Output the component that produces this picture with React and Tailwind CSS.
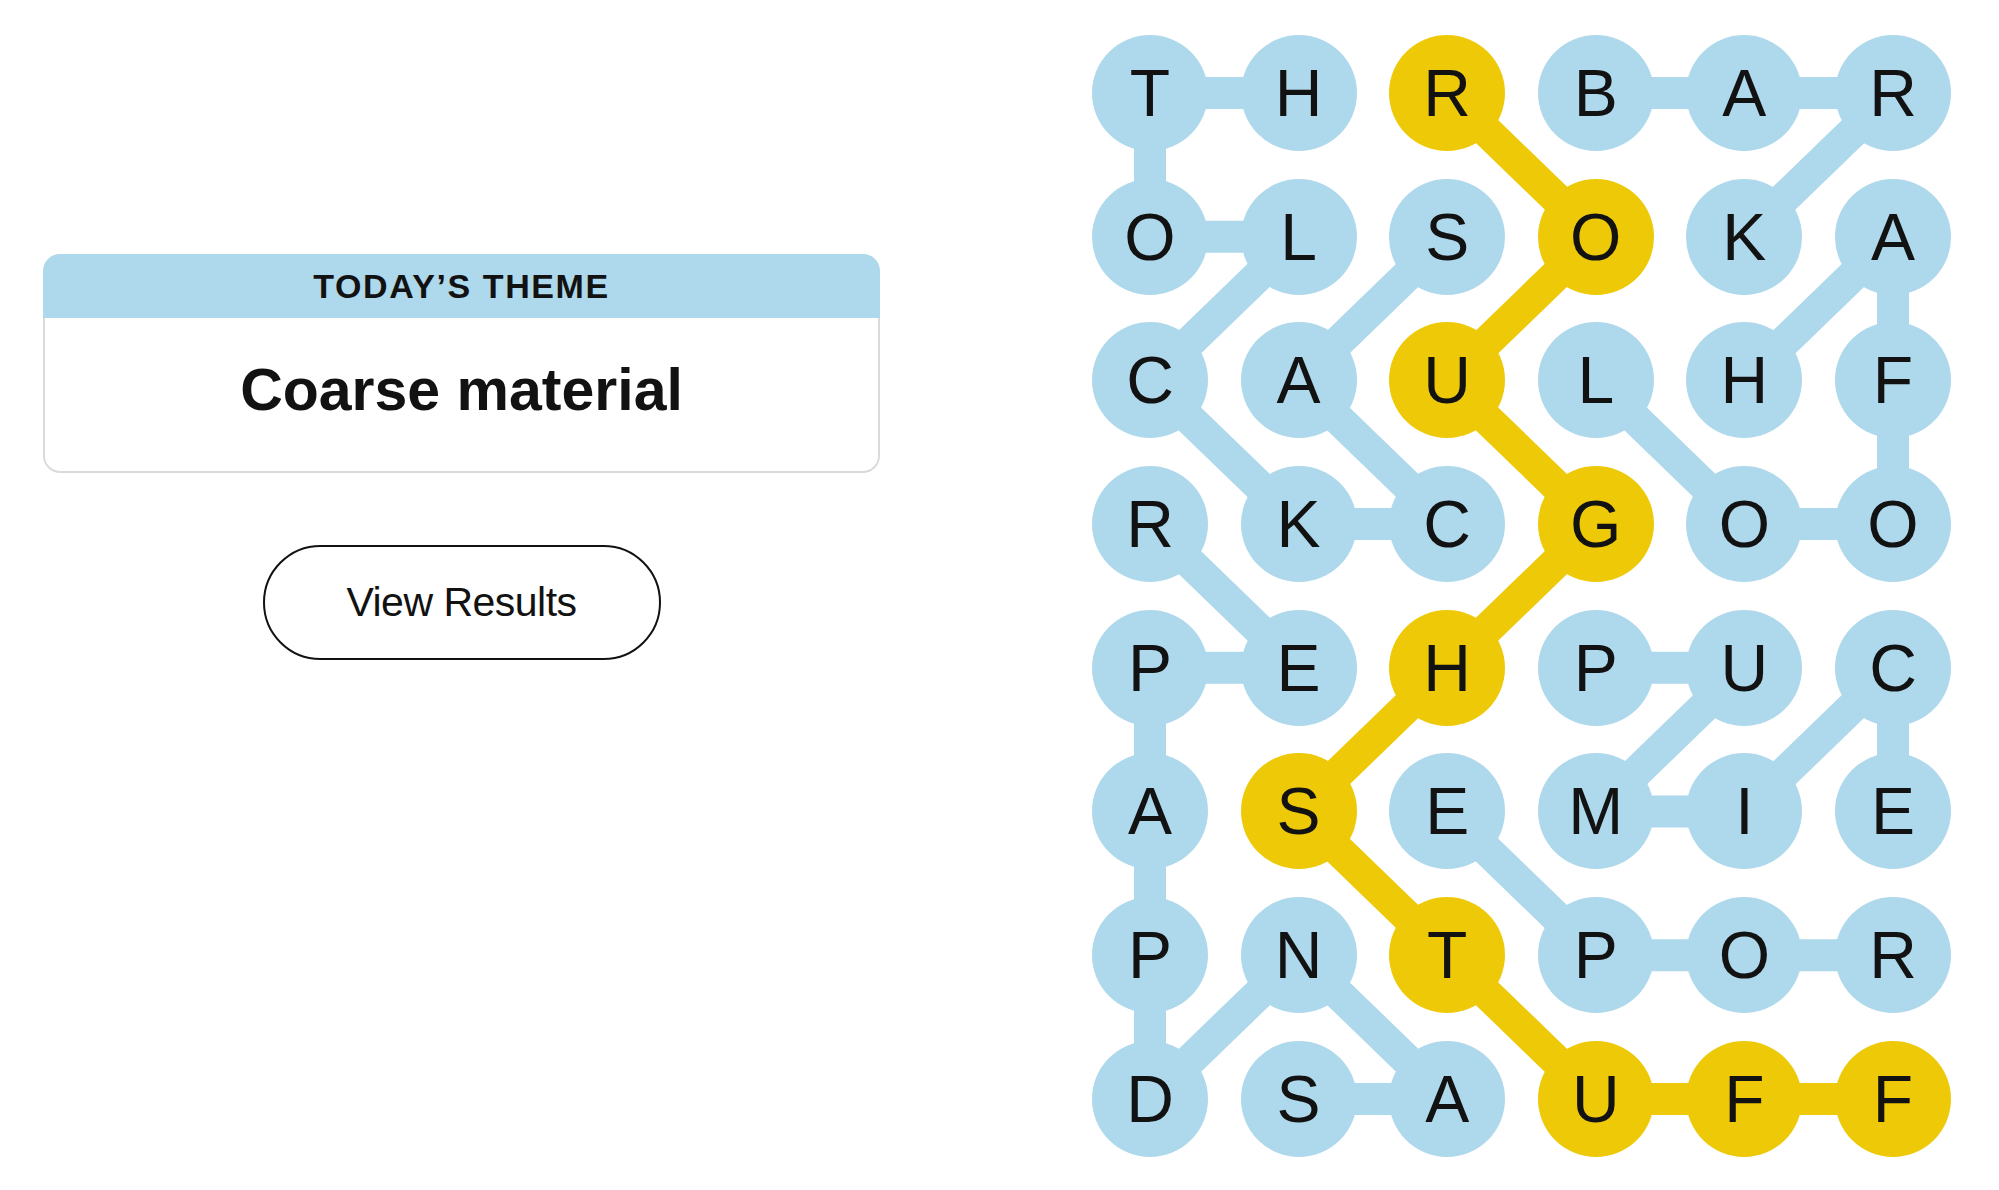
import React from "react";

const ROWS = ["THRBAR", "OLSOKA", "CAULHF", "RKCGOO", "PEHPUC", "ASEMIE", "PNTPOR", "DSAUFF"];

const CELL = 116;
const STEP_X = 148.6;
const STEP_Y = 143.7;

const BLUE = "#aed8eb";
const YELLOW = "#eec908";

// Found words, each as the ordered path of [row, col] cells.
const WORDS = [
  { color: BLUE, path: [[1, 2], [2, 1], [3, 2], [3, 1], [2, 0], [1, 1], [1, 0], [0, 0], [0, 1]] }, // SACKCLOTH
  { color: BLUE, path: [[2, 3], [3, 4], [3, 5], [2, 5], [1, 5], [2, 4]] }, // LOOFAH
  { color: BLUE, path: [[7, 1], [7, 2], [6, 1], [7, 0], [6, 0], [5, 0], [4, 0], [4, 1], [3, 0]] }, // SANDPAPER
  { color: BLUE, path: [[4, 3], [4, 4], [5, 3], [5, 4], [4, 5], [5, 5]] }, // PUMICE
  { color: BLUE, path: [[6, 5], [6, 4], [6, 3], [5, 2]] }, // ROPE
  { color: BLUE, path: [[0, 3], [0, 4], [0, 5], [1, 4]] }, // BARK
  { color: YELLOW, path: [[0, 2], [1, 3], [2, 2], [3, 3], [4, 2], [5, 1], [6, 2], [7, 3], [7, 4], [7, 5]] }, // ROUGHSTUFF
];

const cellColor = {};
WORDS.forEach((w) => w.path.forEach(([r, c]) => (cellColor[`${r}-${c}`] = w.color)));

const cx = (c) => CELL / 2 + c * STEP_X;
const cy = (r) => CELL / 2 + r * STEP_Y;

function Board() {
  const width = CELL + 5 * STEP_X;
  const height = CELL + 7 * STEP_Y;
  return (
    <div className="relative w-[859px] h-[1122px]">
      <svg className="absolute inset-0" width={width} height={height} viewBox={`0 0 ${width} ${height}`}>
        {WORDS.map((w, i) => (
          <polyline
            key={i}
            points={w.path.map(([r, c]) => `${cx(c)},${cy(r)}`).join(" ")}
            fill="none"
            stroke={w.color}
            strokeWidth="32"
            strokeLinejoin="round"
          />
        ))}
      </svg>
      <div className="relative grid grid-cols-[repeat(6,116px)] grid-rows-[repeat(8,116px)] gap-x-[32.6px] gap-y-[27.7px]">
        {ROWS.map((row, r) =>
          row.split("").map((ch, c) => (
            <div
              key={`${r}-${c}`}
              className="w-[116px] h-[116px] rounded-full flex items-center justify-center text-[66px] leading-none text-[#121212] font-['Liberation_Sans',Arial,sans-serif]"
              style={{ backgroundColor: cellColor[`${r}-${c}`] }}
            >
              {ch}
            </div>
          ))
        )}
      </div>
    </div>
  );
}

export default function App() {
  return (
    <div className="w-[1999px] h-[1190px] bg-white flex overflow-hidden font-['Liberation_Sans',Arial,sans-serif]">
      <div className="ml-[43px] w-[837px] pt-[254px] flex flex-col items-center">
        <div className="w-full flex flex-col">
          <div className="h-[64px] bg-[#aed8eb] rounded-t-[17px] flex items-center justify-center">
            <span className="text-[34px] font-bold tracking-[1.6px] leading-none text-[#121212]">TODAY’S THEME</span>
          </div>
          <div className="h-[155px] border-x-2 border-b-2 border-[#dadada] rounded-b-[17px] flex items-center justify-center pb-[8px]">
            <span className="text-[59px] font-bold leading-none text-[#121212]">Coarse material</span>
          </div>
        </div>
        <button className="mt-[72px] w-[398px] h-[115px] rounded-full border-2 border-[#121212] bg-white flex items-center justify-center">
          <span className="text-[41px] leading-none tracking-[-0.5px] text-[#121212]">View Results</span>
        </button>
      </div>
      <div className="ml-[212px] mt-[35px]">
        <Board />
      </div>
    </div>
  );
}
